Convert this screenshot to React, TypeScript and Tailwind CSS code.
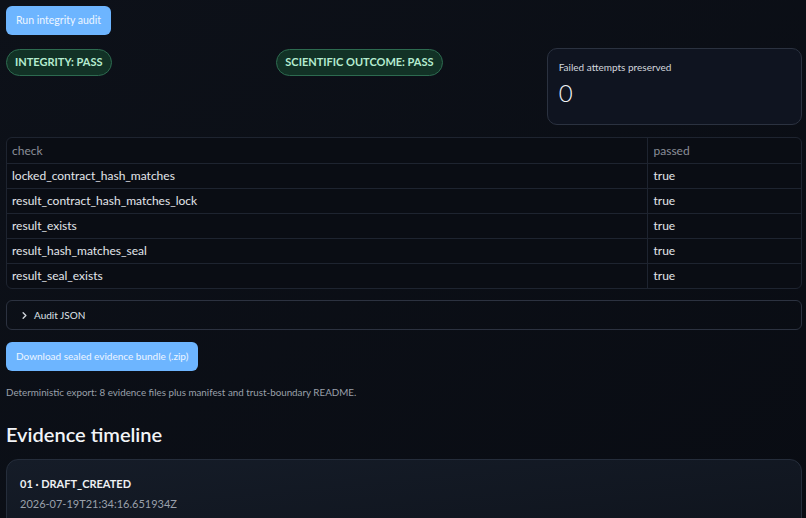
import { ChevronRight } from "lucide-react";

const checks = [
  "locked_contract_hash_matches",
  "result_contract_hash_matches_lock",
  "result_exists",
  "result_hash_matches_seal",
  "result_seal_exists",
];

export default function App() {
  return (
    <div
      className="min-h-screen w-full overflow-hidden bg-[#0b0f17] bg-gradient-to-br from-[#0d1119] to-[#090c13] text-[#e6e8ec]"
      style={{ fontFamily: "Lato, 'Noto Sans', sans-serif" }}
    >
      <div className="flex flex-col pl-[6px] pr-[4px] pt-[6px]">
        <div>
          <button className="h-[29px] rounded-[6px] bg-[#6db5ff] px-[10px] text-[10.5px] text-[#eef6ff]">
            Run integrity audit
          </button>
        </div>

        <div className="mt-[13px] grid grid-cols-3 gap-[15px]">
          <div>
            <span className="inline-flex h-[27px] items-center rounded-full border border-[#2d6b50] bg-[#123226] px-[8px] text-[11px] font-bold text-[#b5ecd0]">
              INTEGRITY: PASS
            </span>
          </div>
          <div>
            <span className="inline-flex h-[27px] items-center rounded-full border border-[#2d6b50] bg-[#123226] px-[8px] text-[11px] font-bold text-[#b5ecd0]">
              SCIENTIFIC OUTCOME: PASS
            </span>
          </div>
          <div className="h-[77px] rounded-[10px] border border-[#2b3240] bg-[#0f1420] px-[11px] pt-[11px]">
            <div className="text-[10px] text-[#d3d7de]">Failed attempts preserved</div>
            <div className="mt-[4px] text-[24px] font-light leading-[28px] text-[#f1f3f6]">0</div>
          </div>
        </div>

        <div className="mt-[12px] overflow-hidden rounded-[6px] border border-[#1e2430] bg-[#0a0d14]">
          <table className="w-full border-collapse text-[12px]">
            <thead>
              <tr className="h-[25px]">
                <th className="border-b border-r border-[#1e2430] px-[5px] text-left font-normal text-[#8a8f99]">
                  check
                </th>
                <th className="w-[154px] border-b border-[#1e2430] px-[6px] text-left font-normal text-[#8a8f99]">
                  passed
                </th>
              </tr>
            </thead>
            <tbody>
              {checks.map((c, i) => (
                <tr key={c} className="h-[25px]">
                  <td
                    className={`border-r border-[#1e2430] px-[5px] text-[#e3e6eb] ${
                      i < checks.length - 1 ? "border-b" : ""
                    }`}
                  >
                    {c}
                  </td>
                  <td
                    className={`border-[#1e2430] px-[6px] text-[#e3e6eb] ${
                      i < checks.length - 1 ? "border-b" : ""
                    }`}
                  >
                    true
                  </td>
                </tr>
              ))}
            </tbody>
          </table>
        </div>

        <div className="mt-[11px] flex h-[30px] items-center rounded-[6px] border border-[#2c3240] px-[12px] text-[10px] text-[#dfe3e8]">
          <ChevronRight size={11} strokeWidth={3} className="text-[#d0d4da]" />
          <span className="ml-[4px]">Audit JSON</span>
        </div>

        <div className="mt-[12px]">
          <button className="h-[29px] rounded-[6px] bg-[#6db5ff] px-[10px] text-[10px] text-[#eef6ff]">
            Download sealed evidence bundle (.zip)
          </button>
        </div>

        <p className="mt-[15px] text-[9.8px] leading-[12px] text-[#9aa0aa]">
          Deterministic export: 8 evidence files plus manifest and trust-boundary README.
        </p>

        <h2 className="mt-[22px] text-[20px] font-semibold leading-[28px] text-[#f2f4f7]">
          Evidence timeline
        </h2>

        <div className="mt-[11px] h-[80px] rounded-[12px] border border-[#252d3b] bg-gradient-to-br from-[#151c28] to-[#0f141d] px-[13px] pt-[16px]">
          <div className="text-[11px] font-bold text-[#eef0f3]">01 · DRAFT_CREATED</div>
          <div className="mt-[3px] text-[11px] text-[#9aa0aa]">2026-07-19T21:34:16.651934Z</div>
          <div className="mt-[8px] h-[10px] w-[310px] rounded-t-[4px] bg-[#181e29]" />
        </div>
      </div>
    </div>
  );
}
